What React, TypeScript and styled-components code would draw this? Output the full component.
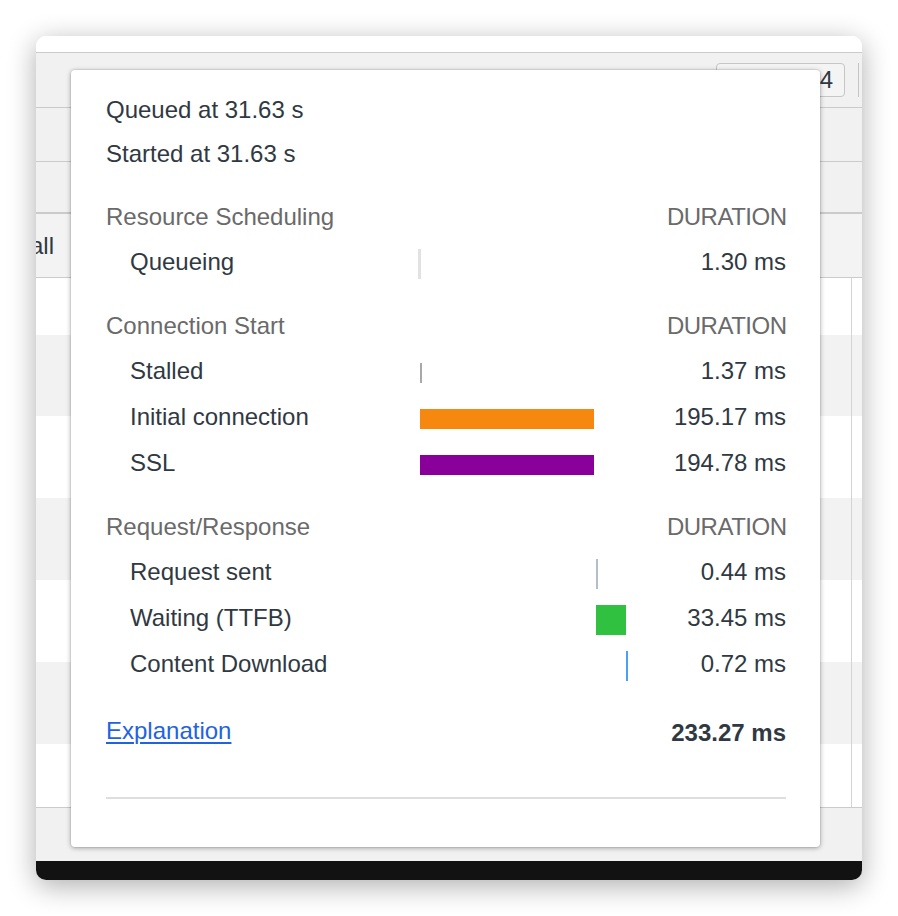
import React from 'react';
import styled, { createGlobalStyle } from 'styled-components';

const GlobalStyle = createGlobalStyle`
  html, body {
    margin: 0;
    padding: 0;
    background: #ffffff;
  }
  body {
    font-family: 'Liberation Sans', Arial, Helvetica, sans-serif;
    color: #303942;
  }
`;

const Page = styled.div`
  width: 898px;
  height: 916px;
  padding: 36px;
  box-sizing: border-box;
`;

const Window = styled.div`
  position: relative;
  width: 826px;
  display: flex;
  flex-direction: column;
  border-radius: 10px;
  overflow: hidden;
  background: #ffffff;
  box-shadow: 0 6px 28px rgba(0, 0, 0, 0.32);
`;

const TitleStrip = styled.div`
  height: 16px;
  background: #ffffff;
  border-bottom: 1px solid #cbcbcb;
`;

const ToolbarRow = styled.div<{ $height: number; $border?: number }>`
  height: ${(p) => p.$height}px;
  display: flex;
  align-items: center;
  justify-content: flex-end;
  padding-right: 3px;
  background: #f1f1f1;
  border-bottom: ${(p) => p.$border ?? 1}px solid #cbcbcb;
`;

const ThrottleBox = styled.div`
  width: 129px;
  height: 34px;
  box-sizing: border-box;
  display: flex;
  align-items: center;
  justify-content: flex-end;
  padding-right: 11px;
  border: 1px solid #c6c6c6;
  border-radius: 4px;
  background: #f4f4f4;
  font-size: 24px;
  color: #303942;
`;

const ToolbarSeparator = styled.div`
  width: 1px;
  height: 34px;
  margin-left: 13px;
  background: #c4c4c4;
`;

const HeaderRow = styled.div`
  height: 63px;
  display: flex;
  align-items: center;
  background: #f3f3f3;
  border-bottom: 1px solid #cbcbcb;
`;

const HeaderCell = styled.div`
  width: 18px;
  display: flex;
  justify-content: flex-end;
  overflow: hidden;
  white-space: nowrap;
  font-size: 24px;
  color: #303942;
`;

const TableRow = styled.div<{ $height: number; $striped: boolean }>`
  height: ${(p) => p.$height}px;
  display: grid;
  grid-template-columns: 1fr 11px;
  background: ${(p) => (p.$striped ? '#f2f2f2' : '#ffffff')};
`;

const RowTail = styled.div`
  border-left: 1px solid #d4d4d4;
`;

const TableEnd = styled.div`
  border-top: 1px solid #cbcbcb;
  height: 53px;
  background: #f1f1f1;
`;

const BlackBar = styled.div`
  height: 19px;
  background: #121212;
`;

const Popover = styled.div`
  position: absolute;
  left: 35px;
  top: 34px;
  width: 749px;
  box-sizing: border-box;
  padding: 18px 34px 48px 35px;
  background: #ffffff;
  border-radius: 4px;
  box-shadow: 0 1px 5px rgba(0, 0, 0, 0.35), 0 0 0 1px rgba(0, 0, 0, 0.05);
  font-size: 24px;
`;

const InfoLine = styled.div`
  height: 44px;
  line-height: 44px;
  color: #303942;
`;

const Section = styled.div`
  margin-top: 19px;
`;

const Grid = styled.div<{ $height: number }>`
  display: grid;
  grid-template-columns: 312px 210px 1fr;
  align-items: center;
  height: ${(p) => p.$height}px;
`;

const SectionTitle = styled.div`
  color: #6a6a6a;
  white-space: nowrap;
`;

const DurationHead = styled.div`
  grid-column: 3;
  text-align: right;
  color: #6a6a6a;
  letter-spacing: -0.5px;
  margin-right: -0.5px;
`;

const RowLabel = styled.div`
  padding-left: 24px;
  color: #303942;
  white-space: nowrap;
`;

const BarCell = styled.div`
  display: flex;
  align-items: center;
  height: 100%;
  padding-top: 4px;
  box-sizing: border-box;
`;

const Bar = styled.div<{ $color: string }>`
  flex: none;
  background: ${(p) => p.$color};
`;

const Duration = styled.div`
  text-align: right;
  color: #303942;
  white-space: nowrap;
`;

const TotalRow = styled.div`
  margin-top: 22px;
  height: 44px;
  display: flex;
  align-items: center;
  justify-content: space-between;
`;

const ExplanationLink = styled.a`
  color: #1f63e2;
  text-decoration: underline;
  text-decoration-thickness: 2px;
  text-underline-offset: 3px;
  cursor: pointer;
`;

const Total = styled.div`
  font-weight: 700;
  color: #303942;
  padding-top: 3px;
`;

const Divider = styled.div`
  margin-top: 44px;
  height: 2px;
  background: #dedede;
`;

type Timing = {
  label: string;
  duration: string;
  left: number;
  width: number;
  height: number;
  color: string;
};

type TimingSection = {
  title: string;
  rows: Timing[];
};

const sections: TimingSection[] = [
  {
    title: 'Resource Scheduling',
    rows: [
      { label: 'Queueing', duration: '1.30 ms', left: 0, width: 3, height: 30, color: '#e2e2e2' },
    ],
  },
  {
    title: 'Connection Start',
    rows: [
      { label: 'Stalled', duration: '1.37 ms', left: 2, width: 2, height: 20, color: '#a9a9a9' },
      { label: 'Initial connection', duration: '195.17 ms', left: 2, width: 174, height: 20, color: '#f6870f' },
      { label: 'SSL', duration: '194.78 ms', left: 2, width: 174, height: 20, color: '#880099' },
    ],
  },
  {
    title: 'Request/Response',
    rows: [
      { label: 'Request sent', duration: '0.44 ms', left: 178, width: 2, height: 30, color: '#b2bec8' },
      { label: 'Waiting (TTFB)', duration: '33.45 ms', left: 178, width: 30, height: 30, color: '#31c141' },
      { label: 'Content Download', duration: '0.72 ms', left: 208, width: 2, height: 30, color: '#4aa0f5' },
    ],
  },
];

const bodyRows = [57, 81, 82, 82, 82, 82, 63];

const App: React.FC = () => {
  return (
    <Page>
      <GlobalStyle />
      <Window>
        <TitleStrip />
        <ToolbarRow $height={54}>
          <ThrottleBox>4</ThrottleBox>
          <ToolbarSeparator />
        </ToolbarRow>
        <ToolbarRow $height={53} />
        <ToolbarRow $height={50} $border={2} />
        <HeaderRow>
          <HeaderCell>Waterfall</HeaderCell>
        </HeaderRow>
        {bodyRows.map((h, i) => (
          <TableRow key={i} $height={h} $striped={i % 2 === 1}>
            <div />
            <RowTail />
          </TableRow>
        ))}
        <TableEnd />
        <BlackBar />

        <Popover>
          <InfoLine>Queued at 31.63 s</InfoLine>
          <InfoLine>Started at 31.63 s</InfoLine>
          {sections.map((section) => (
            <Section key={section.title}>
              <Grid $height={44}>
                <SectionTitle>{section.title}</SectionTitle>
                <DurationHead>DURATION</DurationHead>
              </Grid>
              {section.rows.map((row) => (
                <Grid $height={46} key={row.label}>
                  <RowLabel>{row.label}</RowLabel>
                  <BarCell>
                    <Bar
                      $color={row.color}
                      style={{ marginLeft: row.left, width: row.width, height: row.height }}
                    />
                  </BarCell>
                  <Duration>{row.duration}</Duration>
                </Grid>
              ))}
            </Section>
          ))}
          <TotalRow>
            <ExplanationLink>Explanation</ExplanationLink>
            <Total>233.27 ms</Total>
          </TotalRow>
          <Divider />
        </Popover>
      </Window>
    </Page>
  );
};

export default App;
